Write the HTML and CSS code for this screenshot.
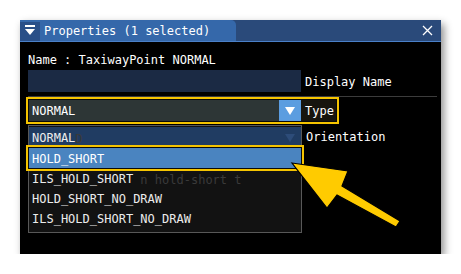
FILE: index.html
```html
<!DOCTYPE html>
<html lang="en">
<head>
    <meta charset="UTF-8">
    <meta name="viewport" content="width=device-width, initial-scale=1.0">
    <title>Properties</title>
    <link rel="stylesheet" href="styles.css">
</head>
<body>
    <div class="window">
        <div class="titlebar">
            <div class="tab">
                <div class="collapse">
                    <svg width="12" height="12" viewBox="0 0 12 12">
                        <rect x="1" y="0" width="10" height="2" fill="#fff"/>
                        <polygon points="1,4 11,4 6,10" fill="#fff"/>
                    </svg>
                </div>
                <span class="title">Properties (1 selected)</span>
            </div>
            <svg class="close" width="11" height="11" viewBox="0 0 11 11">
                <path d="M1 1 L10 10 M10 1 L1 10" stroke="#fff" stroke-width="1.3"/>
            </svg>
        </div>

        <div class="content">
            <div class="name-row">Name : TaxiwayPoint NORMAL</div>

            <div class="field-row">
                <div class="text-input"></div>
                <span class="field-label">Display Name</span>
            </div>

            <div class="separator"></div>

            <div class="combo highlight">
                <div class="combo-value">NORMAL</div>
                <div class="combo-button">
                    <svg width="10" height="8" viewBox="0 0 10 8"><polygon points="0,0 10,0 5,8" fill="#fff"/></svg>
                </div>
                <div class="combo-label">Type</div>
            </div>

            <div class="lower">
                <div class="popup">
                    <div class="item preview">
                        <span class="ghost ghost-d">D</span>
                        <span class="item-text">NORMAL</span>
                        <svg class="dim-arrow" width="10" height="8" viewBox="0 0 10 8"><polygon points="0,0 10,0 5,8" fill="#2d4c79"/></svg>
                    </div>
                    <div class="item selected highlight"><span class="item-text">HOLD_SHORT</span></div>
                    <div class="item">
                        <span class="ghost ghost-hold">n hold-short t</span>
                        <span class="item-text">ILS_HOLD_SHORT</span>
                    </div>
                    <div class="item"><span class="item-text">HOLD_SHORT_NO_DRAW</span></div>
                    <div class="item"><span class="item-text">ILS_HOLD_SHORT_NO_DRAW</span></div>
                </div>
                <div class="side">
                    <span class="field-label">Orientation</span>
                </div>
            </div>
        </div>

        <svg class="pointer" width="125" height="80" viewBox="0 0 125 80">
            <polygon points="12,8 68,16 62,31 120,66 116,72 57,40 47,53" fill="#ffcb00" stroke="#000" stroke-width="1.2" stroke-linejoin="miter"/>
        </svg>
    </div>
</body>
</html>
```

FILE: styles.css
```css
body {
    margin: 0;
    background-color: #fff;
    font-family: "DejaVu Sans Mono", "Liberation Mono", monospace;
    font-size: 12px;
    color: #fff;
}

.window {
    position: relative;
    margin: 20px 0 0 20px;
    width: 421px;
    height: 234px;
    background-color: #000;
    box-shadow: 3px 4px 8px rgba(0, 0, 0, 0.45);
}

.titlebar {
    display: flex;
    align-items: stretch;
    height: 21px;
    background-color: #2a4a7a;
    border-bottom: 1px solid #4a80c8;
}

.tab {
    display: flex;
    align-items: center;
    width: 216px;
    background-color: #3568aa;
    border-radius: 0 5px 0 0;
}

.collapse {
    display: flex;
    align-items: center;
    justify-content: center;
    width: 20px;
    height: 19px;
    margin-top: 1px;
    background-color: #294f88;
}

.title {
    margin-left: 4px;
    padding-top: 2px;
    line-height: 21px;
}

.close {
    align-self: center;
    margin-left: auto;
    margin-right: 8px;
}

.content {
    padding: 9px 4px 0 8px;
}

.name-row {
    height: 16px;
    padding-top: 1px;
    line-height: 16px;
    margin-bottom: -1px;
}

.field-row {
    display: flex;
    margin-top: 3px;
    height: 22px;
}

.text-input {
    width: 273px;
    background-color: #1b2a44;
}

.field-label {
    padding: 1px 0 0 4px;
    line-height: 22px;
}

.separator {
    margin-top: 4px;
    width: 409px;
    height: 1px;
    background-color: #3c3c3c;
}

/* yellow callout frame drawn over the widgets */
.highlight {
    box-shadow: 0 0 0 1px #0a0a0a, 0 0 0 3px #f5c400;
}

.combo {
    display: flex;
    margin: 3px 0 0 1px;
    width: 307px;
    height: 21px;
}

.combo-value {
    flex: 1;
    padding: 1px 0 0 3px;
    line-height: 21px;
    background-color: #2d3636;
}

.combo-button {
    display: flex;
    align-items: center;
    justify-content: center;
    width: 22px;
    background-color: #5b9de0;
}

.combo-label {
    width: 31px;
    padding: 1px 0 0 4px;
    line-height: 21px;
    background-color: #17150e;
}

.lower {
    display: flex;
    margin-top: 4px;
}

.popup {
    width: 272px;
    padding: 1px 0 4px;
    background-color: #121212;
    border: 1px solid #585858;
}

.item {
    position: relative;
    height: 20px;
    line-height: 20px;
    padding-left: 3px;
    color: #ececec;
}

.item.preview {
    height: 21px;
    line-height: 21px;
    background-color: #203c62;
}

.item.selected {
    background-color: #4a84c0;
    color: #fff;
}

.ghost {
    position: absolute;
    top: 2px;
    color: #3a3a3a;
    white-space: pre;
}

.ghost-d {
    left: calc(3px + 6ch);
}

.ghost-hold {
    left: calc(3px + 15ch);
}

.item-text {
    position: relative;
    top: 1px;
}

.dim-arrow {
    position: absolute;
    right: 6px;
    top: 7px;
}

.side {
    padding-top: 2px;
}

.side .field-label {
    line-height: 20px;
}

.pointer {
    position: absolute;
    left: 260px;
    top: 135px;
}
```
